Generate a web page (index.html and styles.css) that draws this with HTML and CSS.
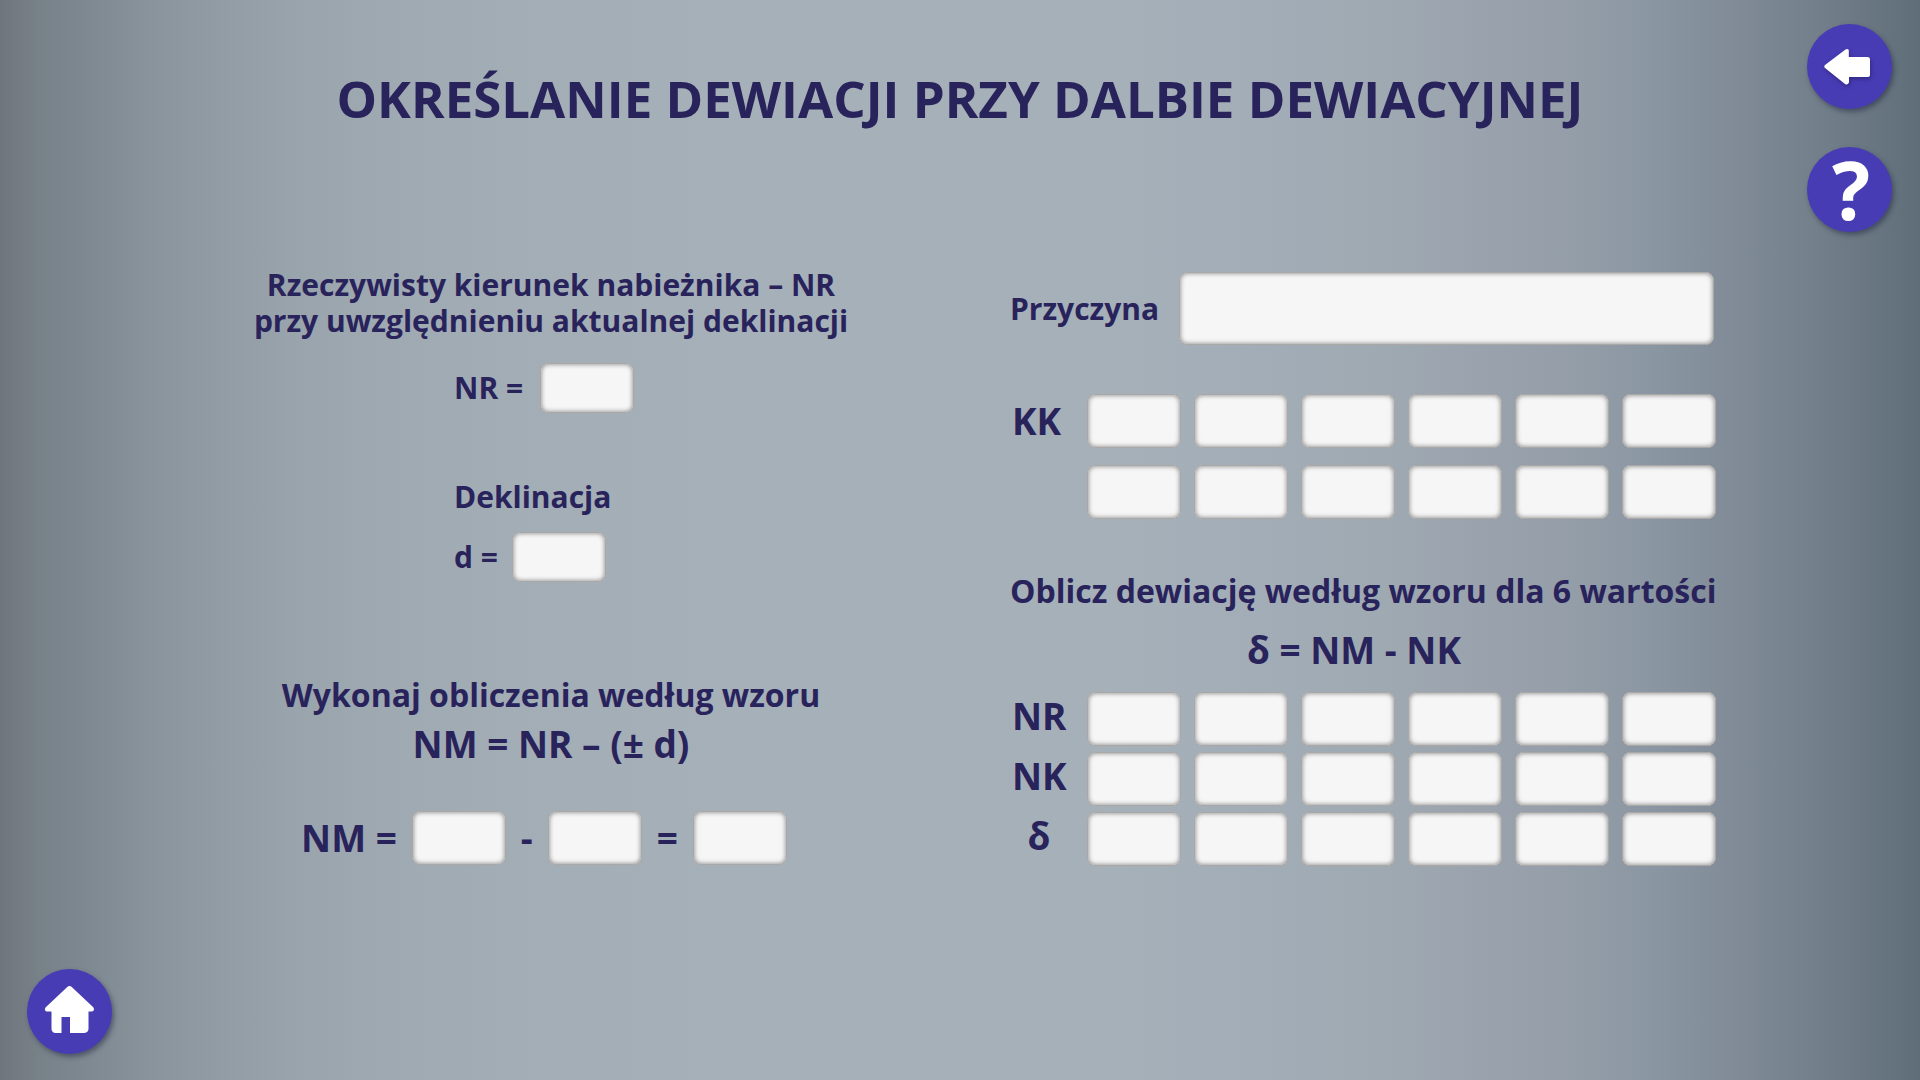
FILE: index.html
```html
<!DOCTYPE html>
<html lang="pl">
<head>
<meta charset="utf-8">
<meta name="viewport" content="width=device-width, initial-scale=1">
<title>Określanie dewiacji przy dalbie dewiacyjnej</title>
<link rel="stylesheet" href="styles.css">
</head>
<body>
<div class="page">
  <nav class="side side-left" aria-label="Start">
    <button class="round" type="button" aria-label="Strona główna">
      <svg class="icon" viewBox="0 0 85 85" aria-hidden="true"><path d="M40 18.2q2.500-2.400 5 0L66 38q1.500 1.800.6 3.500-.5 1-2 1H61.500V60q-.3 3.500-4 4H43V48H34.500V64H28.500q-3.700-.3-4-4V42.500H20q-1.500 0-2-1.500-.3-1.800 1-3z"/></svg>
    </button>
  </nav>

  <main class="main">
    <h1 class="title">OKREŚLANIE DEWIACJI PRZY DALBIE DEWIACYJNEJ</h1>
    <form class="columns">
      <section class="column">
        <h2 class="text">Rzeczywisty kierunek nabieżnika – NR<br>przy uwzględnieniu aktualnej deklinacji</h2>
        <div class="block">
          <div class="field">
            <label class="text" for="nr">NR =</label>
            <input class="box box-low" id="nr" type="text">
          </div>
          <h2 class="text declination">Deklinacja</h2>
          <div class="field field-close">
            <label class="text" for="d">d =</label>
            <input class="box box-low" id="d" type="text">
          </div>
        </div>
        <h2 class="subtitle">Wykonaj obliczenia według wzoru</h2>
        <p class="formula">NM = NR – (± d)</p>
        <div class="equation">
          <label class="formula" for="nm1">NM =</label>
          <input class="box" id="nm1" type="text">
          <label class="formula" for="nm2">-</label>
          <input class="box" id="nm2" type="text">
          <label class="formula wide" for="nm3">=</label>
          <input class="box" id="nm3" type="text">
        </div>
      </section>

      <section class="column column-right">
        <div class="reason">
          <label class="text" for="reason">Przyczyna</label>
          <input class="box box-reason" id="reason" type="text">
        </div>
        <div class="cells headings">
          <label class="formula" for="kk1">KK</label>
          <input class="box" id="kk1" type="text">
          <input class="box" type="text" aria-label="KK 2">
          <input class="box" type="text" aria-label="KK 3">
          <input class="box" type="text" aria-label="KK 4">
          <input class="box" type="text" aria-label="KK 5">
          <input class="box" type="text" aria-label="KK 6">
          <input class="box second-row" type="text" aria-label="KK 7">
          <input class="box" type="text" aria-label="KK 8">
          <input class="box" type="text" aria-label="KK 9">
          <input class="box" type="text" aria-label="KK 10">
          <input class="box" type="text" aria-label="KK 11">
          <input class="box" type="text" aria-label="KK 12">
        </div>
        <h2 class="subtitle task">Oblicz dewiację według wzoru dla 6 wartości</h2>
        <p class="formula deviation">δ = NM - NK</p>
        <div class="cells results">
          <label class="formula" for="nr1">NR</label>
          <input class="box" id="nr1" type="text">
          <input class="box" type="text" aria-label="NR 2">
          <input class="box" type="text" aria-label="NR 3">
          <input class="box" type="text" aria-label="NR 4">
          <input class="box" type="text" aria-label="NR 5">
          <input class="box" type="text" aria-label="NR 6">
          <label class="formula" for="nk1">NK</label>
          <input class="box" id="nk1" type="text">
          <input class="box" type="text" aria-label="NK 2">
          <input class="box" type="text" aria-label="NK 3">
          <input class="box" type="text" aria-label="NK 4">
          <input class="box" type="text" aria-label="NK 5">
          <input class="box" type="text" aria-label="NK 6">
          <label class="formula delta" for="delta1">δ</label>
          <input class="box" id="delta1" type="text">
          <input class="box" type="text" aria-label="δ 2">
          <input class="box" type="text" aria-label="δ 3">
          <input class="box" type="text" aria-label="δ 4">
          <input class="box" type="text" aria-label="δ 5">
          <input class="box" type="text" aria-label="δ 6">
        </div>
      </section>
    </form>
  </main>

  <nav class="side side-right" aria-label="Nawigacja">
    <button class="round" type="button" aria-label="Wstecz">
      <svg class="icon icon-shadow" viewBox="0 0 85 85" aria-hidden="true"><path d="M18 41 38.500 25.500q2-1.300 3.300.5V33H60.500q2.300 0 2.500 2V51q0 2-2 2H42V58.500q-1.500 3-4 1.500L18 44q-1.500-1.500 0-3z"/></svg>
    </button>
    <button class="round help" type="button">?</button>
  </nav>
</div>
</body>
</html>
```
FILE: styles.css
```css
* {
  box-sizing: border-box;
}

body {
  margin: 0;
  color: #29235c;
  font-family: "Open Sans", "Noto Sans", sans-serif;
  font-weight: 700;
}

h1, h2, p {
  margin: 0;
}

.page {
  display: grid;
  grid-template-columns: 140px minmax(0, 1fr) 140px;
  min-height: 100vh;
  background: linear-gradient(90deg,
    #70757d 0%, #778188 2%, #808a93 5%, #89949d 8%, #919ba4 11%, #99a3ac 15%,
    #9fa9b2 20%, #a3adb6 27%, #a6b0b9 38%, #a6b0b9 58%, #a3adb7 65%,
    #9fa9b2 72%, #99a2ac 78%, #929ca7 83%, #8a96a2 86%, #818c98 90%,
    #75818c 94%, #6b7883 97%, #5e6e79 100%);
}

.side {
  display: flex;
  flex-direction: column;
  align-items: center;
  gap: 38px;
  padding: 24px 2px 26px 0;
}

.side-left {
  justify-content: flex-end;
}

.round {
  display: flex;
  align-items: center;
  justify-content: center;
  width: 85px;
  height: 85px;
  padding: 0;
  border: 0;
  border-radius: 50%;
  background: #483cb5;
  box-shadow: 2px 3px 5px rgba(30, 35, 65, 0.5);
  color: #fff;
  cursor: pointer;
}

.icon {
  width: 85px;
  height: 85px;
  fill: currentColor;
}

.icon-shadow {
  filter: drop-shadow(1px 2px 2px rgba(25, 20, 80, 0.5));
}

.help {
  padding: 0 0 3px 4px;
  font-family: inherit;
  font-size: 80px;
  font-weight: 700;
  line-height: 85px;
}

.title {
  margin-top: 64px;
  font-size: 51px;
  line-height: 68px;
  text-align: center;
}

.columns {
  display: grid;
  grid-template-columns: minmax(0, 614fr) minmax(0, 706fr);
  gap: 152px;
  margin-top: 135px;
  padding: 0 64px 0 104px;
}

.column {
  display: flex;
  flex-direction: column;
  align-items: center;
}

.column-right {
  align-items: stretch;
  padding-top: 5px;
}

.text {
  font-size: 30px;
  font-weight: 700;
  line-height: 36px;
  text-align: center;
}

.subtitle {
  margin-top: 93px;
  font-size: 32px;
  line-height: 40px;
  white-space: nowrap;
}

.formula {
  font-size: 37px;
  line-height: 50px;
}

.box {
  width: 94px;
  min-width: 0;
  height: 54px;
  padding: 0 8px;
  border: 1px solid #aaa8a6;
  border-radius: 8px;
  background: #f6f6f6;
  box-shadow: inset 0 0 5px rgba(0, 0, 0, 0.5);
  color: inherit;
  font: inherit;
  font-size: 30px;
  text-align: center;
}

.box-low {
  height: 50px;
}

.block,
.equation {
  margin-right: 14px;
}

.block {
  width: 180px;
  margin-top: 24px;
}

.field {
  display: flex;
  align-items: center;
  justify-content: space-between;
}

.field-close {
  justify-content: flex-start;
  gap: 14px;
  margin-top: 17px;
}

.declination {
  margin-top: 66px;
  text-align: left;
}

.block + .subtitle + .formula {
  margin-top: 4px;
}

.equation {
  display: flex;
  align-items: center;
  gap: 15px;
  margin-top: 42px;
}

.reason {
  display: flex;
  align-items: center;
  gap: 20px;
  padding-right: 2px;
}

.box-reason {
  flex: 1;
  height: 73px;
}

.cells {
  display: grid;
  grid-template-columns: 64px repeat(6, minmax(0, 1fr));
  align-items: center;
  column-gap: 13px;
}

.cells .box {
  width: 100%;
}

.cells .formula {
  padding-left: 2px;
}

.headings {
  row-gap: 17px;
  margin-top: 49px;
}

.second-row {
  grid-column: 2;
}

.task {
  margin-top: 52px;
}

.deviation {
  margin: 14px 0 17px;
  padding-right: 18px;
  text-align: center;
}

.results {
  align-items: start;
  row-gap: 6px;
}

.results .formula {
  line-height: 48px;
}

.results .delta {
  padding-right: 8px;
  text-align: center;
}
```
